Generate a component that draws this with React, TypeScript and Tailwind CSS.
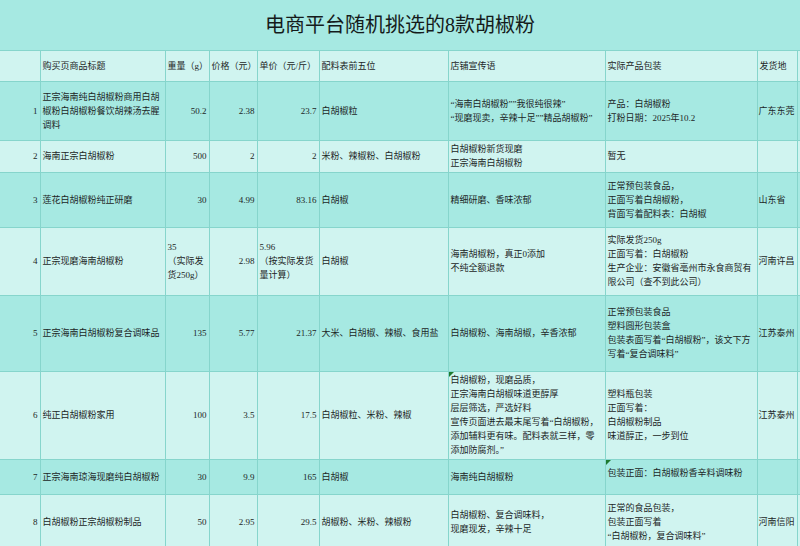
type Row = {
  no: number;
  title: string;
  weight: string[];
  price: string;
  unit: string[];
  ingredients: string;
  slogan: string[];
  pack: string[];
  origin: string;
  height: string;
  tone: "dark" | "light";
  sloganNote?: boolean;
  packNote?: boolean;
  packTop?: boolean;
};

const rows: Row[] = [
  {
    no: 1,
    title: "正宗海南纯白胡椒粉商用白胡椒粉白胡椒粉餐饮胡辣汤去腥调料",
    weight: ["50.2"],
    price: "2.38",
    unit: ["23.7"],
    ingredients: "白胡椒粒",
    slogan: ["“海南白胡椒粉””我很纯很辣”", "“现磨现卖，辛辣十足””精品胡椒粉”"],
    pack: ["产品：白胡椒粉", "打粉日期：2025年10.2"],
    origin: "广东东莞",
    height: "h-[59px]",
    tone: "dark",
  },
  {
    no: 2,
    title: "海南正宗白胡椒粉",
    weight: ["500"],
    price: "2",
    unit: ["2"],
    ingredients: "米粉、辣椒粉、白胡椒粉",
    slogan: ["白胡椒粉新货现磨", "正宗海南白胡椒粉"],
    pack: ["暂无"],
    origin: "",
    height: "h-[32px]",
    tone: "light",
  },
  {
    no: 3,
    title: "莲花白胡椒粉纯正研磨",
    weight: ["30"],
    price: "4.99",
    unit: ["83.16"],
    ingredients: "白胡椒",
    slogan: ["精细研磨、香味浓郁"],
    pack: ["正常预包装食品，", "正面写着白胡椒粉，", "背面写着配料表：白胡椒"],
    origin: "山东省",
    height: "h-[55px]",
    tone: "dark",
  },
  {
    no: 4,
    title: "正宗现磨海南胡椒粉",
    weight: ["35", "（实际发货250g）"],
    price: "2.98",
    unit: ["5.96", "（按实际发货量计算）"],
    ingredients: "白胡椒",
    slogan: ["海南胡椒粉，真正0添加", "不纯全额退款"],
    pack: ["实际发货250g", "正面写着：白胡椒粉", "生产企业：安徽省亳州市永食商贸有限公司（查不到此公司）"],
    origin: "河南许昌",
    height: "h-[68px]",
    tone: "light",
  },
  {
    no: 5,
    title: "正宗海南白胡椒粉复合调味品",
    weight: ["135"],
    price: "5.77",
    unit: ["21.37"],
    ingredients: "大米、白胡椒、辣椒、食用盐",
    slogan: ["白胡椒粉、海南胡椒，辛香浓郁"],
    pack: ["正常预包装食品", "塑料圆形包装盒", "包装表面写着“白胡椒粉”，该文下方写着“复合调味料”"],
    origin: "江苏泰州",
    height: "h-[76px]",
    tone: "dark",
  },
  {
    no: 6,
    title: "纯正白胡椒粉家用",
    weight: ["100"],
    price: "3.5",
    unit: ["17.5"],
    ingredients: "白胡椒粒、米粉、辣椒",
    slogan: [
      "白胡椒粉，现磨品质，",
      "正宗海南白胡椒味道更醇厚",
      "层层筛选，严选好料",
      "宣传页面进去最末尾写着“白胡椒粉，添加辅料更有味。配料表就三样，零添加防腐剂。”",
    ],
    pack: ["塑料瓶包装", "正面写着：", "白胡椒粉制品", "味道醇正，一步到位"],
    origin: "江苏泰州",
    height: "h-[88px]",
    tone: "light",
    sloganNote: true,
  },
  {
    no: 7,
    title: "正宗海南琼海现磨纯白胡椒粉",
    weight: ["30"],
    price: "9.9",
    unit: ["165"],
    ingredients: "白胡椒",
    slogan: ["海南纯白胡椒粉"],
    pack: ["包装正面：白胡椒粉香辛料调味粉"],
    origin: "",
    height: "h-[35px]",
    tone: "dark",
    packNote: true,
    packTop: true,
  },
  {
    no: 8,
    title: "白胡椒粉正宗胡椒粉制品",
    weight: ["50"],
    price: "2.95",
    unit: ["29.5"],
    ingredients: "胡椒粉、米粉、辣椒粉",
    slogan: ["白胡椒粉、复合调味料，", "现磨现发，辛辣十足"],
    pack: ["正常的食品包装，", "包装正面写着", "“白胡椒粉，复合调味料”"],
    origin: "河南信阳",
    height: "h-[56px]",
    tone: "light",
  },
];

const cell = "border-r border-b border-[#86d5cc] px-[2px] align-middle";

const Note = () => (
  <span className="absolute left-0 top-0 h-0 w-0 border-t-[5px] border-r-[5px] border-t-[#1d7a2e] border-r-transparent" />
);

const Lines = ({ items }: { items: string[] }) => (
  <>
    {items.map((t, i) => (
      <div key={i}>{t}</div>
    ))}
  </>
);

export default function App() {
  return (
    <div
      className="h-[546px] w-[800px] overflow-hidden bg-[#a6e9e2] text-[9px] leading-[14px] text-[#1c2626]"
      style={{ fontFamily: '"Liberation Serif", "Noto Sans CJK SC", serif' }}
    >
      <table className="w-[800px] table-fixed border-collapse">
        <colgroup>
          <col className="w-[40px]" />
          <col className="w-[125px]" />
          <col className="w-[44px]" />
          <col className="w-[48px]" />
          <col className="w-[62px]" />
          <col className="w-[129px]" />
          <col className="w-[157px]" />
          <col className="w-[152px]" />
          <col className="w-[40px]" />
          <col className="w-[3px]" />
        </colgroup>
        <tbody>
          <tr className="h-[50px] bg-[#a6e9e2]">
            <td colSpan={10} className="border-b border-[#86d5cc] text-center text-[20px] leading-[24px] text-[#151b1b]">
              电商平台随机挑选的8款胡椒粉
            </td>
          </tr>
          <tr className="h-[31px] bg-[#d0f4f0]">
            <td className="border-b border-r border-[#86d5cc]" />
            <td className={cell}>购买页商品标题</td>
            <td className={cell}>重量（g）</td>
            <td className={cell}>价格（元）</td>
            <td className={cell}>单价（元/斤）</td>
            <td className={cell}>配料表前五位</td>
            <td className={cell}>店铺宣传语</td>
            <td className={cell}>实际产品包装</td>
            <td className={`${cell} whitespace-nowrap`}>发货地</td>
            <td className="border-b border-[#86d5cc]" />
          </tr>
          {rows.map((r) => {
            const bg = r.tone === "dark" ? "bg-[#a6e9e2]" : "bg-[#d0f4f0]";
            return (
              <tr key={r.no} className={`${r.height} ${bg}`}>
                <td className={`${cell} text-right`}>{r.no}</td>
                <td className={cell}>{r.title}</td>
                <td className={`${cell} ${r.weight.length > 1 ? "text-left" : "text-right"}`}>
                  <Lines items={r.weight} />
                </td>
                <td className={`${cell} text-right`}>{r.price}</td>
                <td className={`${cell} ${r.unit.length > 1 ? "text-left" : "text-right"}`}>
                  <Lines items={r.unit} />
                </td>
                <td className={cell}>{r.ingredients}</td>
                <td className={`${cell} relative`}>
                  {r.sloganNote && <Note />}
                  <Lines items={r.slogan} />
                </td>
                <td className={`${cell} relative ${r.packTop ? "align-top pt-[6px]" : ""}`}>
                  {r.packNote && <Note />}
                  <Lines items={r.pack} />
                </td>
                <td className="border-r border-b border-[#86d5cc] pl-[1px] align-middle whitespace-nowrap overflow-visible">
                  {r.origin}
                </td>
                <td className="border-b border-[#86d5cc]" />
              </tr>
            );
          })}
        </tbody>
      </table>
    </div>
  );
}
